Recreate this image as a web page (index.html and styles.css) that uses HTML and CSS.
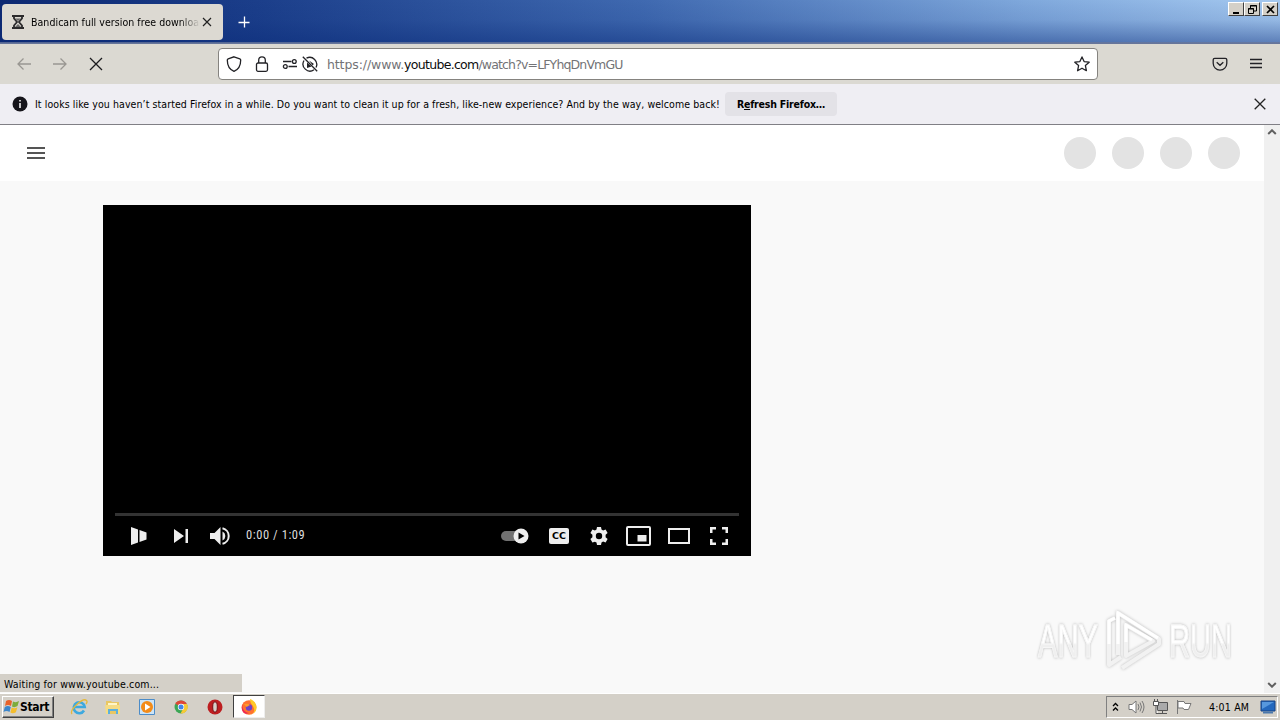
FILE: index.html
```html
<!DOCTYPE html>
<html lang="en">
<head>
  <meta charset="UTF-8">
  <title>Bandicam full version free download</title>
  <link rel="stylesheet" href="styles.css">
</head>
<body>
  <div class="titlebar">
    <div class="tab">
      <svg class="tab-icon" width="14" height="14" viewBox="0 0 14 14"><path d="M1 1h12M1 13h12M3 1v2.500L6 7l-3 3.500V13M11 1v2.500L8 7l3 3.500V13" fill="none" stroke="#2b2a2c" stroke-width="1.800"/><path d="M4 3.500h6L7 6zM4 12l3-3 3 3z" fill="#666"/></svg>
      <span class="tab-title">Bandicam full version free download</span>
      <svg class="tab-close" width="10" height="10" viewBox="0 0 10 10"><path d="M1 1l8 8M9 1L1 9" stroke="#222" stroke-width="1.200"/></svg>
    </div>
    <svg class="new-tab" width="12" height="12" viewBox="0 0 12 12"><path d="M6.500 .5v11M.5 6.500h11" stroke="#fff" stroke-width="1.300"/></svg>
    <div class="window-buttons">
      <span class="win-btn"><svg width="13" height="11" viewBox="0 0 13 11"><path d="M3 8h6v2H3z"/></svg></span>
      <span class="win-btn"><svg width="13" height="11" viewBox="0 0 13 11"><path d="M4.500 4V1.500h6V7H8M4 2h7" fill="none" stroke="#000"/><path d="M2.500 4.500h5v5h-5zM2 5h6" fill="none" stroke="#000"/></svg></span>
      <span class="win-btn close"><svg width="13" height="11" viewBox="0 0 13 11"><path d="M3 2l7 7M10 2L3 9" stroke="#000" stroke-width="1.700"/></svg></span>
    </div>
  </div>

  <div class="toolbar">
    <svg class="nav back" width="16" height="16" viewBox="0 0 16 16"><path d="M15 8H2M7.500 2.500L2 8l5.500 5.500"/></svg>
    <svg class="nav forward" width="16" height="16" viewBox="0 0 16 16"><path d="M1 8h13M8.500 2.500L14 8l-5.500 5.500"/></svg>
    <svg class="nav stop" width="16" height="16" viewBox="0 0 16 16"><path d="M2 2l12 12M14 2L2 14"/></svg>
    <div class="urlbar">
      <svg class="line-icon shield" width="16" height="16" viewBox="0 0 16 16"><path d="M8 .8l5.800 2c.5.200.9.700.9 1.200C14.700 9 13 13.300 8 15.300 3 13.300 1.300 9 1.300 4c0-.5.400-1 .9-1.200z"/></svg>
      <svg class="line-icon lock" width="16" height="16" viewBox="0 0 16 16"><rect x="2.500" y="7" width="11" height="8.300" rx="1.500"/><path d="M4.700 7V4.200a3.300 3.300 0 0 1 6.600 0V7"/></svg>
      <svg class="line-icon perms" width="16" height="16" viewBox="0 0 16 16"><path d="M1 5.500h8.500M6.500 10.500H15"/><circle cx="12.300" cy="5.500" r="1.900"/><circle cx="3.300" cy="10.500" r="1.900"/></svg>
      <svg class="line-icon autoplay" width="16" height="16" viewBox="0 0 16 16"><path d="M4.500 2.200A7 7 0 0 1 14 11.500M12 13.800A7 7 0 0 1 2 4.500M.8.800l14.400 14.400"/><path d="M7 4.500l5 3.500-1.500 1.300zM5 6.500l4.500 4L5 12z" fill="#222226" stroke="none"/></svg>
      <span class="url"><span class="scheme">https://www.</span><b>youtube.com</b><span class="path">/watch?v=LFYhqDnVmGU</span></span>
      <svg class="line-icon star" width="16" height="16" viewBox="0 0 16 16"><path stroke-linejoin="round" d="M8 .9l2.100 4.700 5.100.6-3.800 3.400 1 5.100L8 12.200l-4.400 2.500 1-5.100L.8 6.200l5.100-.6z"/></svg>
    </div>
    <svg class="line-icon pocket" width="16" height="16" viewBox="0 0 16 16"><path d="M2.700 2.300h10.600c.8 0 1.500.6 1.500 1.400v3.600a6.800 6.800 0 0 1-13.600 0V3.700c0-.8.7-1.400 1.500-1.400zM4.700 6.300L8 9.300l3.300-3"/></svg>
    <svg class="line-icon menu" width="16" height="16" viewBox="0 0 16 16"><path d="M2 3.500h12M2 7.500h12M2 11.500h12"/></svg>
  </div>

  <div class="notification">
    <svg class="info" width="16" height="16" viewBox="0 0 16 16"><circle cx="8" cy="8" r="7.500" fill="#15141a"/><path d="M8 7v5M8 4v1.500" stroke="#fff" stroke-width="1.500"/></svg>
    <span class="notification-text">It looks like you haven’t started Firefox in a while. Do you want to clean it up for a fresh, like-new experience? And by the way, welcome back!</span>
    <button class="refresh"><span class="refresh-text">R<u>e</u>fresh Firefox…</span></button>
    <svg class="notification-close" width="12" height="12" viewBox="0 0 12 12"><path d="M.7.7l10.600 10.600M11.300.7L.7 11.300" stroke="#222" stroke-width="1.300"/></svg>
  </div>

  <div class="viewport">
    <div class="page">
      <div class="masthead">
        <svg width="18" height="12" viewBox="0 0 18 12"><path d="M0 1h18M0 6h18M0 11h18" stroke="#555" stroke-width="2"/></svg>
        <div class="placeholders"><i></i><i></i><i></i><i></i></div>
      </div>
      <div class="player">
        <div class="progress"></div>
        <div class="controls">
          <svg class="play" width="16" height="18" viewBox="0 0 16 18"><path d="M0 0l7 2.500v13L0 18zM8.500 3L15.500 5.500v7L8.500 15z"/></svg>
          <svg class="next" width="15" height="14" viewBox="0 0 15 14"><path d="M0 0l10 7-10 7zM11.500 0h2.500v14h-2.500z"/></svg>
          <svg class="volume" width="21" height="20" viewBox="0 0 21 20"><path d="M0 7h4.500L10.500 1v18l-6-6H0zM12.500 5.500a5 5 0 0 1 0 9z"/><path d="M12.500 2.200a8 8 0 0 1 0 15.600" fill="none" stroke="#eee" stroke-width="2"/></svg>
          <span class="time">0:00 / 1:09</span>
          <svg class="auto" width="29" height="16" viewBox="0 0 29 16"><rect x="1" y="3" width="23" height="10" rx="5" fill="#717171"/><circle cx="21" cy="8" r="7.500"/><path d="M18.500 4.500l6 3.500-6 3.500z" class="cut"/></svg>
          <span class="cc">CC</span>
          <svg class="gear" width="18" height="18" viewBox="0 0 18 18"><path d="M7 0h4l.5 2.500 1.600.9L15.600 2.500l2 3.500-2 1.700v2.600l2 1.700-2 3.500-2.500-.9-1.600.9L11 18H7l-.5-2.400-1.600-.9-2.500.9L.4 12l2-1.700V7.700L.4 6l2-3.500 2.500.9 1.600-.9z"/><circle cx="9" cy="9" r="3.200" class="cut"/></svg>
          <svg class="mini" width="25" height="20" viewBox="0 0 25 20"><rect x="1" y="1" width="23" height="18" rx="1" fill="none" stroke="#eee" stroke-width="2"/><path d="M11.500 9h9v6.500h-9z"/></svg>
          <svg class="theater" width="22" height="16" viewBox="0 0 22 16"><path d="M1 1h20v14H1z" fill="none" stroke="#eee" stroke-width="2"/></svg>
          <svg class="full" width="18" height="18" viewBox="0 0 18 18"><path d="M1.250 6V1.250H6M12 1.250h4.750V6M16.750 12v4.750H12M6 16.750H1.250V12" fill="none" stroke="#eee" stroke-width="2.500"/></svg>
        </div>
      </div>
    </div>
    <div class="scrollbar">
      <svg width="10" height="6" viewBox="0 0 10 6"><path d="M1.200 5L5 1.300 8.800 5"/></svg>
      <svg width="10" height="6" viewBox="0 0 10 6"><path d="M1.200 1L5 4.700 8.800 1"/></svg>
    </div>
    <div class="status"><span class="status-text">Waiting for www.youtube.com...</span></div>
    <div class="watermark">
      <span class="mark-text">ANY</span>
      <svg class="mark-logo" width="60" height="66" viewBox="0 0 60 66"><g fill="none" stroke="#f2f2f2" stroke-width="4" stroke-linejoin="round"><path d="M11 10l-6 3v44l12-8"/><path d="M14 47V5l41 26v5L18 60"/><path d="M22 17v31l27-15z"/></g><path d="M14 36V5l40 25M5 36V13l6-3M22 34V17l26 15" fill="none" stroke="#fff" stroke-width="3"/></svg>
      <span class="mark-text">RUN</span>
    </div>
  </div>

  <div class="taskbar">
    <div class="start">
      <svg width="17" height="16" viewBox="0 0 17 16"><path d="M3 2q3-2 6 0L8 7Q5 5 2 7z" fill="#e8622a"/><path d="M10 2.500q3 1.500 6-.5l-1.500 5q-3 2-5.500.500z" fill="#7dac3c"/><path d="M1.800 8q3-2 6 0l-1.300 5q-3-2-6 0z" fill="#3c86cb"/><path d="M8.700 8.500q3 1.500 5.700-.3l-1.500 5q-3 1.800-5.500.3z" fill="#f4bd2d"/></svg>
      <span class="start-text">Start</span>
    </div>
    <div class="quick">
      <svg width="18" height="18" viewBox="0 0 18 18"><path d="M14 12.500a5.500 5.500 0 1 1 .7-3.500H5" fill="none" stroke="#3da9df" stroke-width="2.600"/><path d="M2 16C-1 12 13-1 16.500 2.500c1 1 .3 2.500-.5 3.500" fill="none" stroke="#e5b83b" stroke-width="1.300"/></svg>
      <svg width="18" height="18" viewBox="0 0 18 18"><path d="M2 3h5l1 1h7v12H2z" fill="#e9c763"/><path d="M4 5h9v5H4z" fill="#fff6c8"/><path d="M1 7h15v9h-3v-4H5v4H2z" fill="#f5dc85"/><path d="M4 16v-5h10v5h-2v-3H6v3z" fill="#5db0dd"/></svg>
      <svg width="18" height="18" viewBox="0 0 18 18"><path d="M1.500 1.500h15v15h-15z" fill="#cce4f7" stroke="#4c8cc8"/><circle cx="9" cy="9" r="6" fill="#f38b18"/><path d="M7 5.500l5.500 3.500L7 12.500z" fill="#fff"/></svg>
      <svg width="18" height="18" viewBox="0 0 18 18"><circle cx="9" cy="9" r="6.500" fill="#3ca655"/><path d="M9 9L3.300 5.700A6.600 6.600 0 0 1 14.800 6z" fill="#df4637"/><path d="M9 6h6a6.500 6.500 0 0 1-6.500 9.500L11.500 10z" fill="#f7ca35"/><circle cx="9" cy="9" r="3.200" fill="#fff"/><circle cx="9" cy="9" r="2.500" fill="#4285e8"/></svg>
      <svg width="18" height="18" viewBox="0 0 18 18"><circle cx="9" cy="9" r="7.500" fill="#bd1e20"/><ellipse cx="9" cy="9" rx="2.300" ry="5.200" fill="#d6d0c8" stroke="#760d13"/></svg>
    </div>
    <div class="active-task">
      <svg width="18" height="18" viewBox="0 0 18 18"><circle cx="9" cy="9.500" r="7.300" fill="#ff7130"/><path d="M10 1c3 1 6 3.500 6.500 7.500.5 5-3 8-7.500 8 4 0 6-3 5-6-1-4-4-4.500-4-9.500z" fill="#ffc928"/><path d="M2.500 6C2 9 3 14 9 15c-5 3-9-3-6.500-9z" fill="#ed2a53"/><circle cx="9" cy="9.500" r="3.200" fill="#7042c5"/><path d="M4 6q4-1 6 1L6.500 9z" fill="#ff9a28"/></svg>
    </div>
    <div class="tray">
      <svg class="chevrons" width="7" height="10" viewBox="0 0 7 10"><path d="M1 4l2.500-2.500L6 4M1 8.500L3.500 6 6 8.500" fill="none" stroke="#000" stroke-width="1.300"/></svg>
      <svg class="sound" width="17" height="16" viewBox="0 0 17 16"><path d="M1 5.500h3L8 2v12l-4-3.500H1z" fill="#fff" stroke="#777"/><path d="M10 5q2 3 0 6M12 3.500q3 4.500 0 9M14 2q4 6 0 12" fill="none" stroke="#777"/></svg>
      <svg class="network" width="17" height="16" viewBox="0 0 17 16"><path d="M5.500 3.500h10v8h-10z" fill="#aaa" stroke="#555"/><path d="M10.500 12v2M6 14.500h9" stroke="#555"/><path d="M1.500 2.500h5v4h-5zM2.500 0v2M5.500 0v2M4 6.500v8h2" fill="#fff" stroke="#555"/></svg>
      <svg class="flag" width="17" height="16" viewBox="0 0 17 16"><path d="M1.500 1v14M2 2.500h6l1 2h6l-2.500 6H8l-1-1.500H2z" fill="#fff" stroke="#777"/></svg>
      <span class="clock">4:01 AM</span>
      <svg class="desktop" width="16" height="14" viewBox="0 0 16 14"><path d="M1 1h14v10H1z" fill="#2468bd" stroke="#194282"/><path d="M2 2h12L2 9z" fill="#5798dd"/><path d="M3 12.500h10" stroke="#4b78ad" stroke-width="2"/></svg>
    </div>
  </div>
</body>
</html>
```
FILE: styles.css
```css
* {
  box-sizing: border-box;
}

body {
  margin: 0;
  width: 1280px;
  height: 720px;
  overflow: hidden;
  display: flex;
  flex-direction: column;
  font-family: "DejaVu Sans Condensed", "DejaVu Sans", sans-serif;
  font-stretch: condensed;
  font-size: 10.5px;
  color: #000;
}

svg {
  display: block;
  flex: none;
}

span {
  white-space: nowrap;
}

.titlebar {
  height: 44px;
  flex: none;
  display: flex;
  align-items: flex-start;
  background: linear-gradient(180deg, transparent 0, rgba(9, 42, 120, 0.1) 45%, rgba(9, 42, 120, 0.45) 95%, #66759a 97%), linear-gradient(90deg, #0c2872, #1b3e8a 20%, #3f69b0 50%, #7fa8dc 80%, #a5c9f0);
}

.tab {
  width: 221px;
  height: 36px;
  margin: 4px 0 0 2px;
  padding: 0 11px 0 9px;
  display: flex;
  align-items: center;
  background: #dcd9d2;
  border-radius: 4px;
}

.tab-title {
  width: 169px;
  margin-left: 6px;
  overflow: hidden;
  letter-spacing: 0.05px;
  -webkit-mask-image: linear-gradient(90deg, #000 88%, transparent);
}

.tab-close {
  margin-left: 2px;
}

.new-tab {
  margin: 16px 0 0 15px;
}

.window-buttons {
  display: flex;
  margin: 2px 2px 0 auto;
}

.win-btn {
  width: 16px;
  height: 14px;
  padding: 1px;
  background: #d4d0c8;
  border: 1px solid;
  border-color: #fff #404040 #404040 #fff;
}

.win-btn.close {
  margin-left: 2px;
}

.toolbar {
  height: 40px;
  flex: none;
  display: flex;
  align-items: center;
  padding-left: 16px;
  background: #dbd9d2;
}

.nav {
  margin-right: 20px;
  fill: none;
  stroke: #999792;
  stroke-width: 1.3;
}

.nav.stop {
  margin-right: 0;
  stroke: #1b1b1e;
}

.urlbar {
  width: 880px;
  height: 32px;
  margin-left: 114px;
  padding: 0 7px;
  display: flex;
  align-items: center;
  background: #fff;
  border: 1px solid #85837f;
  border-radius: 4px;
}

.line-icon {
  fill: none;
  stroke: #222226;
  stroke-width: 1.3;
}

.lock {
  margin-left: 12px;
}

.perms {
  margin-left: 12px;
}

.autoplay {
  margin-left: 4px;
}

.url {
  margin-left: 9px;
  font-family: "DejaVu Sans", sans-serif;
  font-stretch: normal;
  font-size: 12.5px;
  color: #737376;
}

.scheme {
  letter-spacing: -0.1px;
}

.url b {
  font-weight: normal;
  letter-spacing: -0.7px;
  color: #0c0c0d;
}

.path {
  letter-spacing: -0.85px;
}

.star {
  margin-left: auto;
}

.pocket {
  margin-left: 114px;
}

.menu {
  margin-left: 20px;
}

.notification {
  height: 41px;
  flex: none;
  display: flex;
  align-items: center;
  padding-left: 12px;
  background: #efeef3;
  border-bottom: 1px solid #807f85;
}

.notification-text {
  width: 684px;
  margin-left: 7px;
  letter-spacing: 0.08px;
}

.refresh {
  width: 112px;
  height: 24px;
  margin-left: 6px;
  padding: 0;
  border: 0;
  border-radius: 4px;
  background: #e3e2e7;
  font: bold 10.5px "DejaVu Sans Condensed", "DejaVu Sans", sans-serif;
  font-stretch: condensed;
  letter-spacing: -0.2px;
}

.notification-close {
  margin: 0 14px 0 auto;
}

.viewport {
  position: relative;
  height: 568px;
  flex: none;
  display: flex;
  background: #f9f9f9;
}

.page {
  width: 1264px;
}

.masthead {
  height: 56px;
  display: flex;
  align-items: center;
  justify-content: space-between;
  padding: 0 24px 0 27px;
  background: #fff;
}

.placeholders {
  display: flex;
  gap: 16px;
}

.placeholders i {
  width: 32px;
  height: 32px;
  border-radius: 50%;
  background: #e3e3e3;
}

.player {
  width: 648px;
  height: 351px;
  margin: 24px 0 0 103px;
  padding: 308px 12px 0;
  background: #000;
}

.progress {
  height: 3px;
  background: #333;
}

.controls {
  height: 40px;
  display: flex;
  align-items: center;
  padding: 0 11px 0 16px;
  fill: #eee;
}

.cut {
  fill: #000;
}

.next {
  margin-left: 27px;
}

.volume {
  margin-left: 21px;
}

.time {
  margin-left: 15px;
  font-family: Roboto, sans-serif;
  font-size: 12.5px;
  letter-spacing: 0.55px;
  line-height: 14px;
  margin-bottom: 2px;
  color: #ddd;
}

.auto {
  margin-left: auto;
}

.cc {
  width: 20px;
  height: 16px;
  margin-left: 20px;
  border-radius: 2px;
  background: #eee;
  color: #000;
  font: bold 9.5px/16px "DejaVu Sans", sans-serif;
  text-align: center;
}

.gear {
  margin-left: 21px;
}

.mini {
  margin-left: 18px;
}

.theater {
  margin-left: 17px;
}

.full {
  margin-left: 20px;
}

.scrollbar {
  width: 16px;
  padding: 4px 3px 5px;
  display: flex;
  flex-direction: column;
  justify-content: space-between;
  background: #f0f0f0;
  fill: none;
  stroke: #606060;
  stroke-width: 2;
}

.status {
  position: absolute;
  left: 0;
  bottom: 1px;
  width: 242px;
  height: 18px;
  padding-left: 4px;
  line-height: 20px;
  background: #d4d0c8;
}

.status-text {
  letter-spacing: 0.15px;
}

.watermark {
  position: absolute;
  left: 1038px;
  top: 483px;
  width: 198px;
  display: flex;
  align-items: center;
}

.mark-text {
  width: 104px;
  flex: none;
  margin-right: -38px;
  font: 47px/66px "Liberation Sans", sans-serif;
  color: transparent;
  background: linear-gradient(#fff 52%, #efefef 56%);
  -webkit-background-clip: text;
  background-clip: text;
  -webkit-text-stroke: 1px #f6f6f6;
  filter: drop-shadow(0 0 1.5px #bbb);
  transform: scaleX(0.62);
  transform-origin: left;
}

.mark-logo {
  margin-right: 5px;
  filter: drop-shadow(0 0 1.5px #bbb);
}

.taskbar {
  height: 27px;
  flex: none;
  display: flex;
  align-items: center;
  padding: 0 2px 1px;
  background: #d4d0c8;
  border-top: 1px solid #fff;
}

.start {
  width: 52px;
  height: 22px;
  display: flex;
  align-items: center;
  border: 1px solid;
  border-color: #fff #404040 #404040 #fff;
  box-shadow: inset -1px -1px #808080;
}

.start-text {
  font-size: 12px;
  font-weight: bold;
  letter-spacing: -0.3px;
}

.quick {
  display: flex;
  gap: 16px;
  margin-left: 16px;
}

.active-task {
  width: 32px;
  height: 23px;
  margin-left: 9px;
  display: flex;
  align-items: center;
  justify-content: center;
  background: #fff;
  border: 1px solid;
  border-color: #404040 #eee #eee #404040;
}

.tray {
  width: 172px;
  height: 22px;
  margin-left: auto;
  padding-left: 5px;
  display: flex;
  align-items: center;
  border: 1px solid;
  border-color: #808080 #fff #fff #808080;
}

.sound {
  margin-left: 9px;
}

.network,
.flag {
  margin-left: 7px;
}

.clock {
  width: 41px;
  margin-left: 16px;
  letter-spacing: 0.2px;
}

.desktop {
  margin-left: 10px;
}
```
